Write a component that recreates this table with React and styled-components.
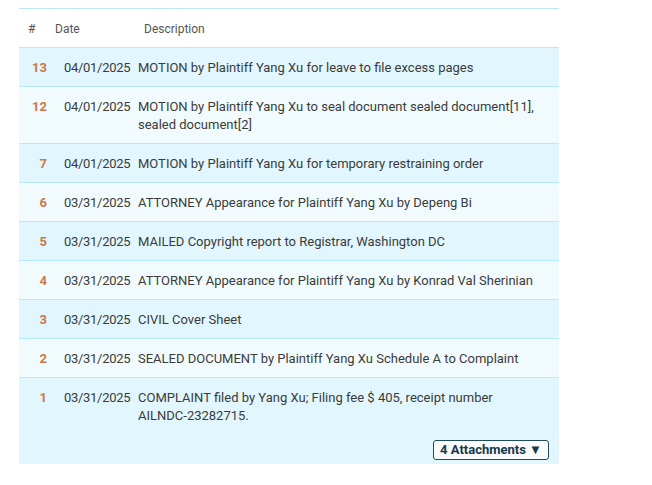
import React from "react";
import styled, { createGlobalStyle } from "styled-components";

const Global = createGlobalStyle`
  html, body { margin: 0; padding: 0; background: #ffffff; }
  body { font-family: Roboto, "Noto Sans", sans-serif; }
`;

const Page = styled.div`
  padding: 8px 0 0 19px;
`;

const Table = styled.div`
  width: 540px;
  border-top: 1px solid #b9e8fb;
`;

const HeaderRow = styled.div`
  display: grid;
  grid-template-columns: 27px 89px 1fr;
  height: 39px;
  box-sizing: border-box;
  padding: 2px 0 0 9px;
  align-items: center;
  border-bottom: 1px solid #b9e8fb;
  font-size: 12px;
  color: #555;
`;

const Row = styled.div`
  display: grid;
  grid-template-columns: 45px 74px minmax(0, 1fr);
  padding: 11px 10px ${(p) => (p.$hasFooter ? "4px" : "9px")} 0;
  background: ${(p) => (p.$alt ? "#f1fbfe" : "#e2f6fd")};
  border-bottom: ${(p) => (p.$last ? "none" : "1px solid #b9e8fb")};
  font-size: 13px;
  line-height: 18px;
  color: #3b3b3b;
`;

const Num = styled.div`
  text-align: right;
  padding-right: 17px;
  font-weight: 700;
  color: #c97a45;
`;

const DateCell = styled.div`
  white-space: nowrap;
  letter-spacing: -0.3px;
`;

const Desc = styled.div``;

const NoBreak = styled.span`
  white-space: nowrap;
`;

const Footer = styled.div`
  grid-column: 1 / -1;
  display: flex;
  justify-content: flex-end;
  margin-top: 15px;
`;

const AttachButton = styled.button`
  font-family: Roboto, "Noto Sans", sans-serif;
  font-size: 13px;
  font-weight: 700;
  line-height: 16px;
  color: #17394a;
  background: #f8fafb;
  border: 1px solid #1f4b5c;
  border-radius: 3px;
  padding: 1px 6px;
  cursor: pointer;
`;

const rows = [
  { n: 13, d: "04/01/2025", t: "MOTION by Plaintiff Yang Xu for leave to file excess pages" },
  { n: 12, d: "04/01/2025", t: "MOTION by Plaintiff Yang Xu to seal document sealed document[11], sealed document[2]" },
  { n: 7, d: "04/01/2025", t: "MOTION by Plaintiff Yang Xu for temporary restraining order" },
  { n: 6, d: "03/31/2025", t: "ATTORNEY Appearance for Plaintiff Yang Xu by Depeng Bi" },
  { n: 5, d: "03/31/2025", t: "MAILED Copyright report to Registrar, Washington DC" },
  { n: 4, d: "03/31/2025", t: "ATTORNEY Appearance for Plaintiff Yang Xu by Konrad Val Sherinian" },
  { n: 3, d: "03/31/2025", t: "CIVIL Cover Sheet" },
  { n: 2, d: "03/31/2025", t: "SEALED DOCUMENT by Plaintiff Yang Xu Schedule A to Complaint" },
  {
    n: 1,
    d: "03/31/2025",
    t: "COMPLAINT filed by Yang Xu; Filing fee $ 405, receipt number",
    receipt: "AILNDC-23282715.",
    attachments: 4,
  },
];

export default function App() {
  return (
    <Page>
      <Global />
      <Table>
        <HeaderRow>
          <span>#</span>
          <span>Date</span>
          <span>Description</span>
        </HeaderRow>
        {rows.map((r, i) => (
          <Row key={r.n} $alt={i % 2 === 1} $last={i === rows.length - 1} $hasFooter={!!r.attachments}>
            <Num>{r.n}</Num>
            <DateCell>{r.d}</DateCell>
            <Desc>
              {r.t}
              {r.receipt && (
                <>
                  {" "}
                  <NoBreak>{r.receipt}</NoBreak>
                </>
              )}
            </Desc>
            {r.attachments && (
              <Footer>
                <AttachButton>{r.attachments} Attachments ▼</AttachButton>
              </Footer>
            )}
          </Row>
        ))}
      </Table>
    </Page>
  );
}
